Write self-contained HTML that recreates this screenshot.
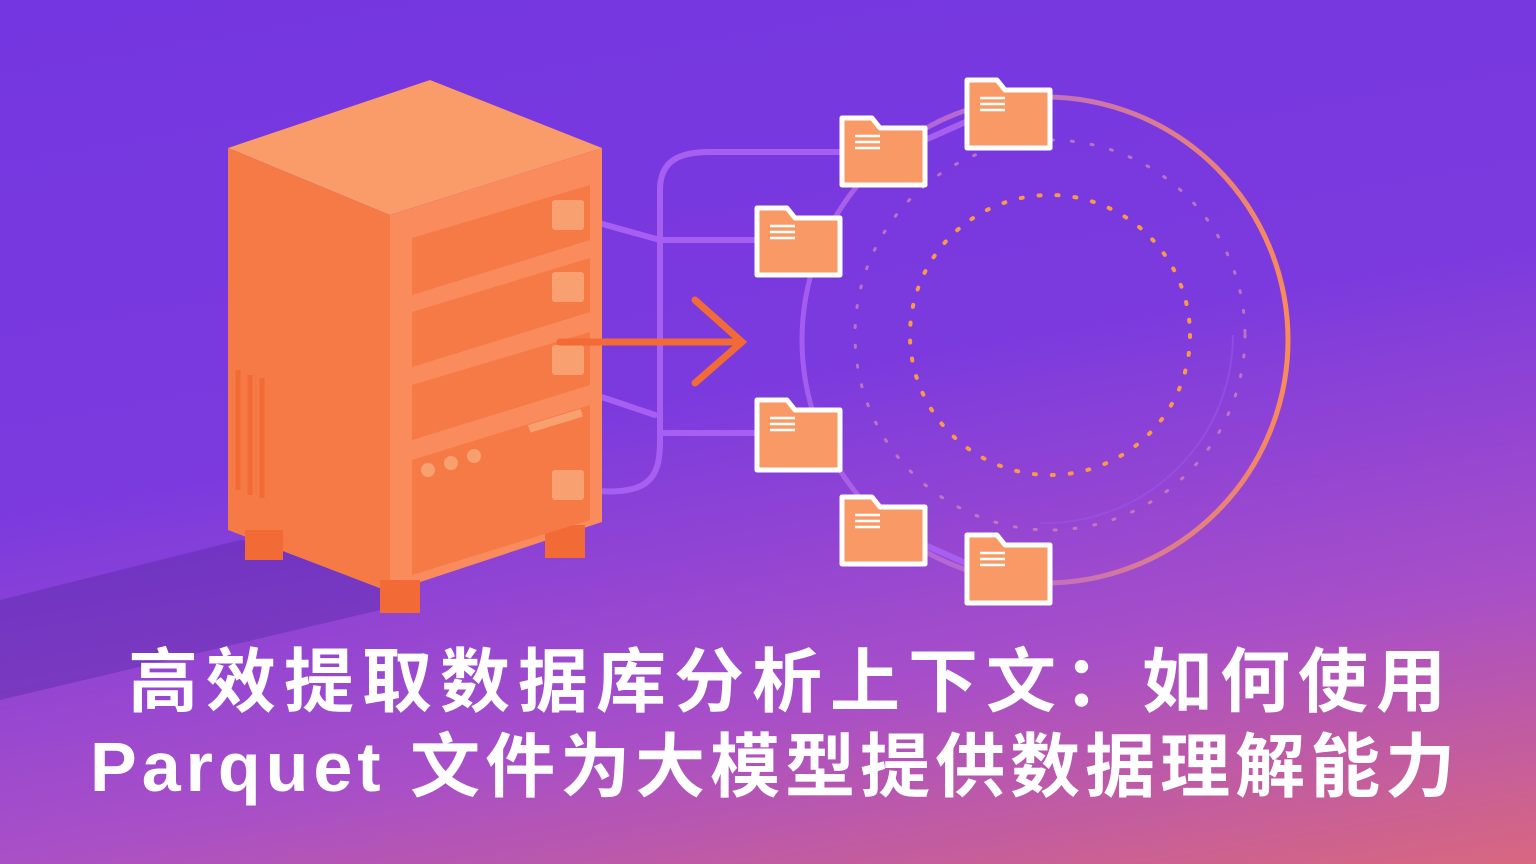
<!DOCTYPE html>
<html><head><meta charset="utf-8"><style>
html,body{margin:0;padding:0;width:1536px;height:864px;overflow:hidden}
body{background:linear-gradient(170deg,#7436e0 0%,#7b3ade 45%,#a84fc8 75%,#d8677f 100%);position:relative;font-family:"Liberation Sans","Noto Sans CJK SC",sans-serif}
.t{position:absolute;color:#fff;font-weight:bold;white-space:nowrap;font-size:70px;line-height:1}
</style></head><body>
<svg width="1536" height="864" style="position:absolute;left:0;top:0">
<defs>
<linearGradient id="ring" x1="0" y1="0" x2="1" y2="0"><stop offset="0" stop-color="#a45cf0"/><stop offset="0.5" stop-color="#c070c0"/><stop offset="1" stop-color="#f98a5a"/></linearGradient>
</defs>
<polygon points="0,600 240,540 420,560 380,610 0,700" fill="#5a2aa8" opacity=".45"/>
<circle cx="1045" cy="340" r="243" fill="none" stroke="url(#ring)" stroke-width="5"/>
<circle cx="1045" cy="335" r="188" fill="none" stroke="#9a55e8" stroke-width="2" opacity=".6" stroke-dasharray="300 900"/>
<circle cx="1050" cy="335" r="140" fill="none" stroke="#f99a4a" stroke-width="4" stroke-dasharray="2 16" stroke-linecap="round"/>
<circle cx="1050" cy="335" r="195" fill="none" stroke="#d88ab8" stroke-width="3" stroke-dasharray="2 18" stroke-linecap="round" opacity=".7"/>
<g fill="none" stroke="#a75ff2" stroke-width="6" stroke-linecap="round">
<path d="M570,215 L660,240 L760,240"/>
<path d="M560,383 L655,415"/>
<path d="M570,488 C650,500 660,480 660,440 L660,190 C660,160 680,152 710,152 L845,152"/>
<path d="M660,433 L760,433"/>
<path d="M925,140 L970,120"/>
<path d="M925,545 L970,565"/>
</g>
<polygon points="228,148 430,80 602,148 390,215" fill="#f99c6a"/>
<polygon points="228,148 390,215 390,592 228,530" fill="#f57a45"/>
<polygon points="390,215 602,148 602,522 390,592" fill="#f98b5c"/>
<rect x="245" y="530" width="38" height="30" fill="#f26a35"/>
<rect x="380" y="580" width="40" height="33" fill="#f26a35"/>
<rect x="545" y="525" width="40" height="33" fill="#f26a35"/>
<g fill="none" stroke="#f26a35" stroke-width="5"><path d="M238,370 V490 M250,375 V495 M262,378 V498"/></g>
<g fill="#f57a45">
<polygon points="412,238 590,185 590,240 412,295"/>
<polygon points="412,312 590,258 590,312 412,367"/>
<polygon points="412,385 590,332 590,385 412,440"/>
<polygon points="412,460 590,405 590,520 412,575"/>
</g>
<g fill="#f9a070"><rect x="552" y="200" width="32" height="30" rx="3"/><rect x="552" y="272" width="32" height="30" rx="3"/><rect x="552" y="345" width="32" height="30" rx="3"/><rect x="552" y="470" width="32" height="30" rx="3"/></g>
<g fill="#f9a070"><circle cx="428" cy="470" r="7"/><circle cx="451" cy="463" r="7"/><circle cx="474" cy="456" r="7"/><rect x="528" y="425" width="55" height="8" transform="rotate(-17 528 425)"/></g>
<g stroke="#f26a35" stroke-width="7" fill="none" stroke-linecap="round"><path d="M560,342 H740 M695,300 L742,342 L695,383"/></g>
<g stroke="#fff" stroke-width="5" fill="#f99a66" stroke-linejoin="round">
<path d="M967,80 h30 l8,10 h45 v58 h-83z"/>
<path d="M842,118 h30 l8,10 h45 v57 h-83z"/>
<path d="M757,208 h30 l8,10 h45 v57 h-83z"/>
<path d="M757,400 h30 l8,10 h45 v60 h-83z"/>
<path d="M842,497 h30 l8,10 h45 v57 h-83z"/>
<path d="M967,535 h30 l8,10 h45 v58 h-83z"/>
</g>
<g stroke="#fff" stroke-width="2.5"><path d="M980,98h25M980,104h25M980,110h25 M855,136h25M855,142h25M855,148h25 M770,226h25M770,232h25M770,238h25 M770,418h25M770,424h25M770,430h25 M855,515h25M855,521h25M855,527h25 M980,553h25M980,559h25M980,565h25"/></g>
</svg>
<div class="t" style="left:128px;top:647px;letter-spacing:8px">高效提取数据库分析上下文：如何使用</div>
<div class="t" style="left:90px;top:732px;letter-spacing:5px">Parquet 文件为大模型提供数据理解能力</div>
</body></html>
